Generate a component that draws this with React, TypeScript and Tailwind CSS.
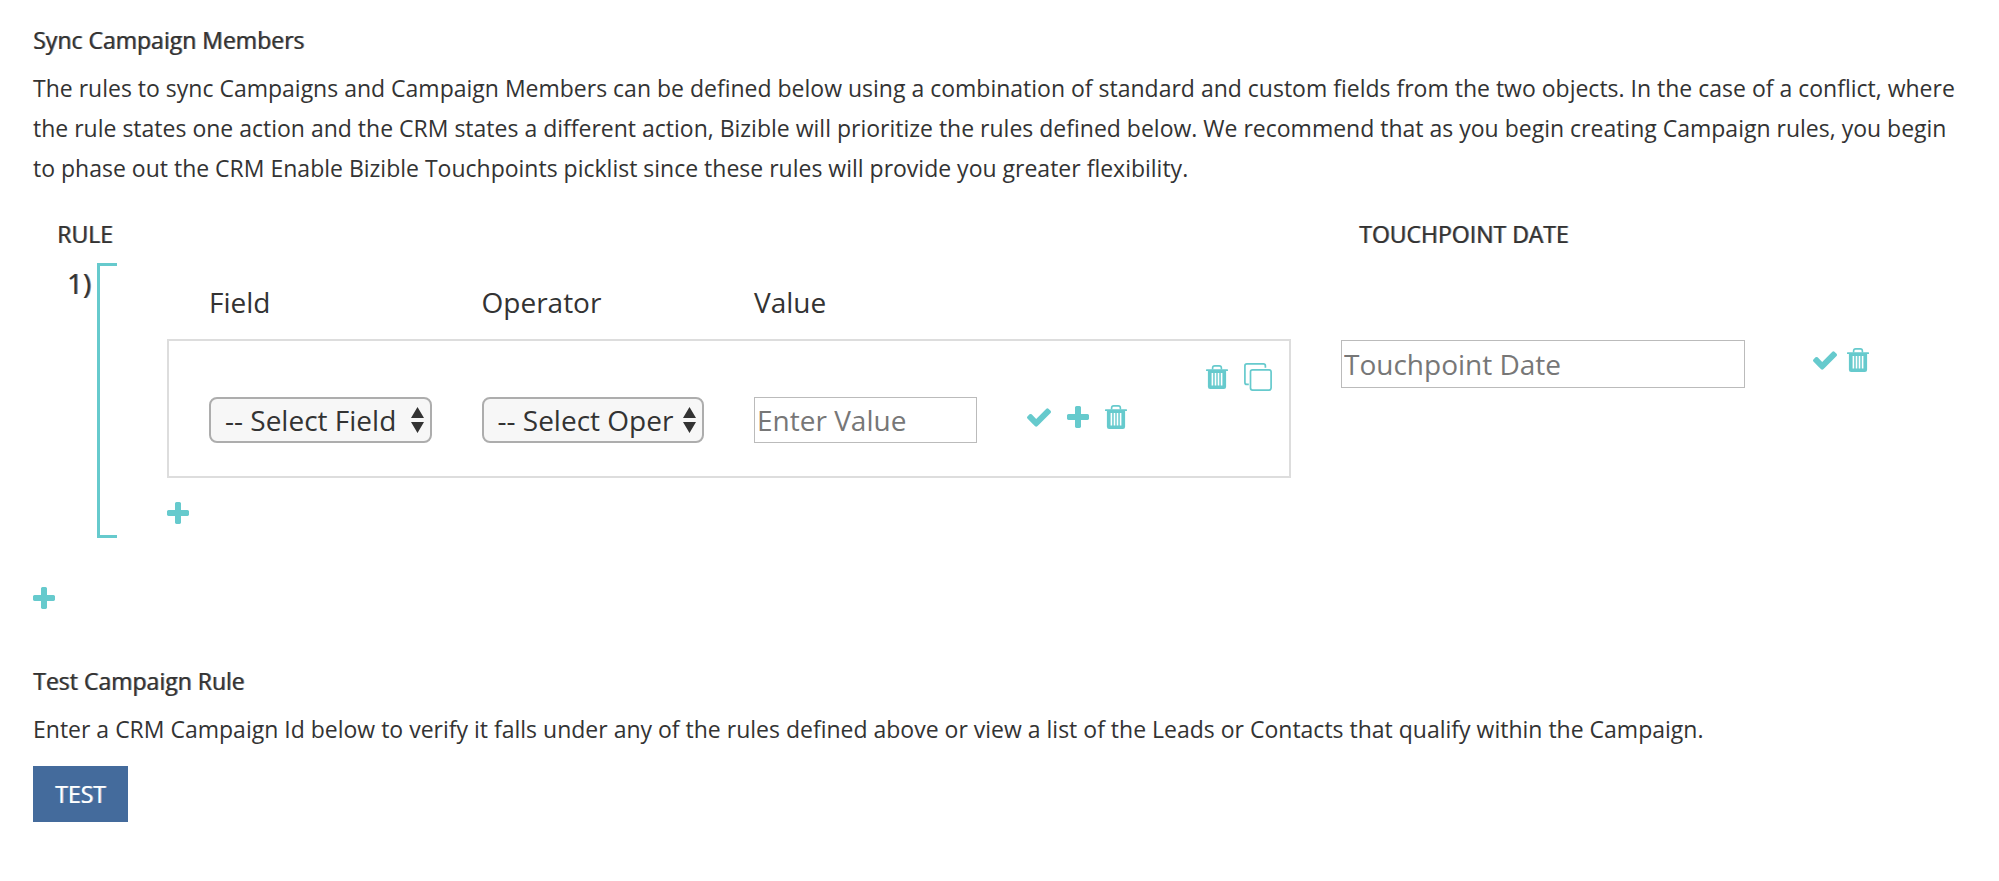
import React, { useState } from "react";

type IconProps = { className?: string };

function CheckIcon({ className = "w-6 h-5" }: IconProps) {
  return (
    <svg viewBox="121 270 1550 1252" fill="currentColor" className={className} aria-hidden="true">
      <path d="M1671 566q0 40-28 68l-724 724-136 136q-28 28-68 28t-68-28l-136-136-362-362q-28-28-28-68t28-68l136-136q28-28 68-28t68 28l294 295 656-657q28-28 68-28t68 28l136 136q28 28 28 68z" />
    </svg>
  );
}

function PlusIcon({ className = "size-[22px]" }: IconProps) {
  return (
    <svg viewBox="192 128 1408 1408" fill="currentColor" className={className} aria-hidden="true">
      <path d="M1600 736v192q0 40-28 68t-68 28h-416v416q0 40-28 68t-68 28h-192q-40 0-68-28t-28-68v-416h-416q-40 0-68-28t-28-68v-192q0-40 28-68t68-28h416v-416q0-40 28-68t68-28h192q40 0 68 28t28 68v416h416q40 0 68 28t28 68z" />
    </svg>
  );
}

function TrashIcon({ className = "w-[22px] h-6" }: IconProps) {
  return (
    <svg viewBox="0 0 22 24" className={className} aria-hidden="true">
      <path d="M6.6 4.6 V3 Q6.6 0.9 8.7 0.9 H13.3 Q15.4 0.9 15.4 3 V4.6" fill="none" stroke="currentColor" strokeWidth="1.6" />
      <rect x="0" y="4.2" width="22" height="1.9" rx="0.6" fill="currentColor" />
      <path
        fill="currentColor"
        fillRule="evenodd"
        d="M1.9 5.5 H20.1 V21.8 Q20.1 24 17.9 24 H4.1 Q1.9 24 1.9 21.8 Z M5.6 8 V20.6 H7.2 V8 Z M8.7 8 V20.6 H10.3 V8 Z M11.7 8 V20.6 H13.3 V8 Z M14.8 8 V20.6 H16.4 V8 Z"
      />
    </svg>
  );
}

function CopyIcon({ className = "size-7" }: IconProps) {
  return (
    <svg viewBox="0 0 28 28" fill="none" stroke="currentColor" strokeWidth="1.7" className={className} aria-hidden="true">
      <rect x="6.5" y="6.8" width="20.6" height="20.3" rx="2" />
      <path d="M21.4 4.8 V2.9 Q21.4 0.9 19.4 0.9 H2.9 Q0.9 0.9 0.9 2.9 V19.4 Q0.9 21.4 2.9 21.4 H4.8" />
    </svg>
  );
}

function IconButton({ label, onClick, children }: { label: string; onClick?: () => void; children: React.ReactNode }) {
  return (
    <button type="button" aria-label={label} title={label} onClick={onClick} className="block shrink-0 text-[#66cacd]">
      {children}
    </button>
  );
}

function RuleSelect({ id, placeholder, options }: { id: string; placeholder: string; options: string[] }) {
  const [value, setValue] = useState("");
  return (
    <div className="relative">
      <select
        id={id}
        value={value}
        onChange={(e) => setValue(e.target.value)}
        className="block h-[46px] w-full appearance-none rounded-lg border-2 border-[#adadad] bg-[#f7f7f7] pl-3.5 pr-7 text-[28px] leading-10"
      >
        <option value="">{placeholder}</option>
        {options.map((o) => <option key={o}>{o}</option>)}
      </select>
      <svg viewBox="0 0 13 26" fill="currentColor" className="pointer-events-none absolute right-2 top-2.5 h-[26px] w-[13px]" aria-hidden="true">
        <path d="M6.5 0 L13 11 H0 Z M0 15 H13 L6.5 26 Z" />
      </svg>
    </div>
  );
}

// regular weight, thickened a little
const strong = "[text-shadow:1px_0_#33333399]";

export default function App() {
  const [value, setValue] = useState("");
  const [date, setDate] = useState("");

  return (
    <main className="bg-white pb-14 pl-[33px] pr-4 pt-5 font-['Open_Sans',sans-serif] text-[23px] leading-10 text-[#333]">
      <section>
        <h2 className={`mb-2 ${strong}`}>Sync Campaign Members</h2>
        <p className="pr-5">
          The rules to sync Campaigns and Campaign Members can be defined below using a combination of standard and
          custom fields from the two objects. In the case of a conflict, where the rule states one action and the CRM
          states a different action, Bizible will prioritize the rules defined below. We recommend that as you begin
          creating Campaign rules, you begin to phase out the CRM Enable Bizible Touchpoints picklist since these rules
          will provide you greater flexibility.
        </p>

        <div className="mt-[26px] grid grid-cols-[84px_1174fr_692fr] gap-y-[9px]">
          <h3 className={`col-span-2 pl-6 ${strong}`}>RULE</h3>
          <h3 className={`pl-[68px] ${strong}`}>TOUCHPOINT DATE</h3>

          {/* rule number + bracket */}
          <div className="flex">
            <span className={`w-16 shrink-0 pr-1.5 text-right text-[28px] ${strong}`}>1)</span>
            <div className="flex-1 border-y-3 border-l-3 border-[#66cacd]" />
          </div>

          {/* conditions */}
          <div className="pb-[14px] pl-[50px] pt-[19px]">
            <div className="mb-[17px] grid grid-cols-4 gap-x-[50px] px-[42px] text-[28px]">
              <label htmlFor="field">Field</label>
              <label htmlFor="operator">Operator</label>
              <label htmlFor="value">Value</label>
            </div>

            <div className="border-2 border-[#ddd] pb-[33px] pt-[22px]">
              <div className="flex items-center justify-end gap-4 pr-[17px]">
                <IconButton label="Delete group"><TrashIcon /></IconButton>
                <IconButton label="Copy group"><CopyIcon /></IconButton>
              </div>
              <div className="mt-1.5 grid grid-cols-4 items-center gap-x-[50px] px-10">
                <RuleSelect id="field" placeholder="-- Select Field --" options={["Campaign Name", "Campaign Type", "Status"]} />
                <RuleSelect id="operator" placeholder="-- Select Operator --" options={["is equal to", "contains", "starts with"]} />
                <input
                  id="value"
                  type="text"
                  placeholder="Enter Value"
                  value={value}
                  onChange={(e) => setValue(e.target.value)}
                  className="h-[46px] w-full border border-[#bbb] px-0.5 text-[28px] placeholder:text-[#777]"
                />
                <div className="flex items-center gap-4 pb-1.5">
                  <IconButton label="Save condition"><CheckIcon /></IconButton>
                  <IconButton label="Add condition"><PlusIcon /></IconButton>
                  <IconButton label="Delete condition"><TrashIcon /></IconButton>
                </div>
              </div>
            </div>

            <div className="mt-6">
              <IconButton label="Add group"><PlusIcon /></IconButton>
            </div>
          </div>

          {/* touchpoint date */}
          <div className="flex items-start pl-[50px] pt-[77px]">
            <input
              type="text"
              aria-label="Touchpoint Date"
              placeholder="Touchpoint Date"
              value={date}
              onChange={(e) => setDate(e.target.value)}
              className="h-12 w-[404px] min-w-0 border border-[#bbb] px-0.5 text-[28px] placeholder:text-[#777]"
            />
            <div className="ml-[68px] mt-2 flex items-center gap-2.5">
              <IconButton label="Save date"><CheckIcon /></IconButton>
              <IconButton label="Delete date"><TrashIcon /></IconButton>
            </div>
          </div>
        </div>

        <div className="mt-[49px]">
          <IconButton label="Add rule"><PlusIcon /></IconButton>
        </div>
      </section>

      <section className="mt-[52px]">
        <h2 className={`mb-2 ${strong}`}>Test Campaign Rule</h2>
        <p>
          Enter a CRM Campaign Id below to verify it falls under any of the rules defined above or view a list of the
          Leads or Contacts that qualify within the Campaign.
        </p>
        <button type="button" className="mt-[17px] block h-14 bg-[#446b9c] px-[22px] text-white [text-shadow:1px_0_#ffffff99]">
          TEST
        </button>
      </section>
    </main>
  );
}
